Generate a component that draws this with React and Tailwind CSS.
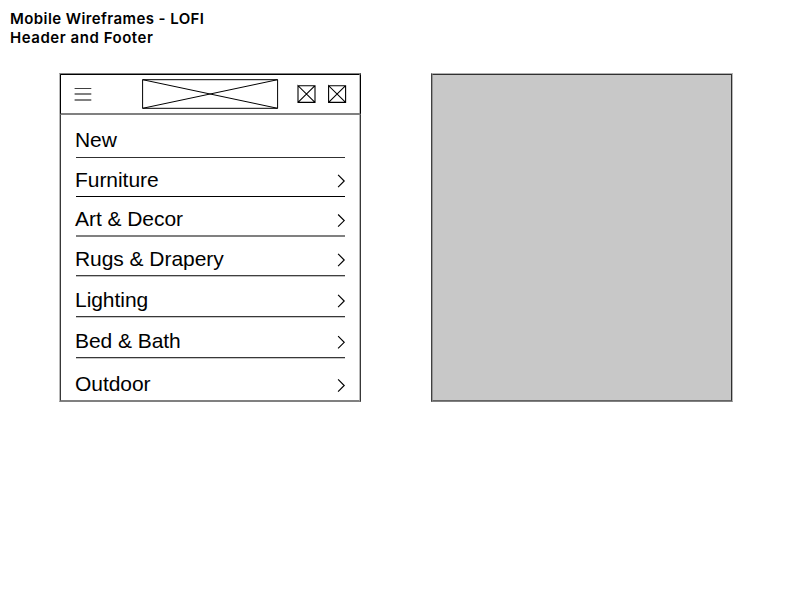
import React from "react";

const items = [
  { label: "New", row: "h-[43px] pt-[13px]", line: "border-t-[#303030] border-t h-px" },
  { label: "Furniture", row: "h-[39px] pt-[10px]", line: "border-t-black border-t h-px", arrow: 13 },
  { label: "Art & Decor", row: "h-[40px] pt-[10px]", line: "bg-[#808080] h-[2px]", arrow: 13.6 },
  { label: "Rugs & Drapery", row: "h-[40px] pt-[10px]", line: "border-t border-t-[#404040] bg-[#bfbfbf] h-[2px]", arrow: 13 },
  { label: "Lighting", row: "h-[41px] pt-[11px]", line: "border-t border-t-[#383838] bg-[#c7c7c7] h-[2px]", arrow: 13 },
  { label: "Bed & Bath", row: "h-[41px] pt-[11px]", line: "border-t border-t-[#383838] bg-[#c7c7c7] h-[2px]", arrow: 13.3 },
  { label: "Outdoor", row: "h-[41px] pt-[13px]", arrow: 13.5 },
];

function Chevron({ center }) {
  return (
    <svg className="mr-[-2px] shrink-0" width="10" height="24" viewBox="0 0 10 24" fill="none" stroke="black" strokeWidth="1.15">
      <path d={`M2.1 ${center - 6.1}L8.2 ${center}L2.1 ${center + 6.1}`} />
    </svg>
  );
}

function CrossBox({ offset }) {
  return (
    <svg width="19" height="19" viewBox="0 0 19 19" fill="none" stroke="black" strokeWidth="1.1">
      <path d={`M${offset} 1.7H${offset + 17}V18.4H${offset}V1.7L${offset + 17} 18.4M${offset} 18.4L${offset + 17} 1.7`} />
    </svg>
  );
}

export default function App() {
  return (
    <main className="h-[612px] w-[792px] overflow-hidden bg-white text-black">
      <h1 className="h-[73px] pl-[10px] pt-[9px] font-['Inter',sans-serif] text-[15px] font-semibold leading-[19px]">
        <span className="block tracking-[0.41px]">Mobile Wireframes - LOFI</span>
        <span className="block tracking-[0.54px]">Header and Footer</span>
      </h1>
      <div className="flex pl-[59px]">
        <section className="h-[329px] w-[302px] border border-t-[#808080] border-b-[#808080] border-l-[#b8b8b8] border-r-[#383838]">
          <div className="h-[327px] w-[300px] border border-t-black border-b-[#808080] border-l-[#383838] border-r-[#b8b8b8]">
            <header className="-ml-px -mr-[2px] flex h-[40px] border-x border-b-2 border-x-black border-b-[#808080]">
              <svg className="ml-[13px] mt-[12px]" width="18" height="16" viewBox="0 0 18 16" fill="none">
                <path d="M0.6 1.5H17.3" stroke="#404040" />
                <path d="M0.6 7H17.3M0.6 13H17.3" stroke="#808080" strokeWidth="2" />
              </svg>
              <svg className="ml-[49px] mt-[3px]" width="138" height="32" viewBox="0 0 138 32" fill="none" stroke="black">
                <path d="M1.6 1.7H136.6V30.3H1.6V1.7L136.6 30.3M1.6 30.3L136.6 1.7" />
              </svg>
              <div className="ml-[18px] mt-[9px] flex gap-[12px]">
                <CrossBox offset={1} />
                <CrossBox offset={0.6} />
              </div>
            </header>
            <nav className="pl-[14px] pr-[15px] font-['Liberation_Sans',Arial,sans-serif] text-[21px] leading-[24px] tracking-[-0.05px]">
              {items.map((item) => (
                <div key={item.label} className={`flex flex-col justify-between ${item.row}`}>
                  <div className="flex h-[24px] justify-between">
                    <span>{item.label}</span>
                    {item.arrow && <Chevron center={item.arrow} />}
                  </div>
                  {item.line && <div className={`-mr-px ml-px ${item.line}`} />}
                </div>
              ))}
            </nav>
          </div>
        </section>
        <section className="ml-[70px] h-[329px] w-[302px] border border-t-[#b0b0b0] border-b-[#808080] border-l-[#404040] border-r-[#b8b8b8]">
          <div className="h-[327px] w-[300px] border border-t-[#303030] border-b-[#646464] border-l-[#969696] border-r-[#303030] bg-[#c8c8c8]" />
        </section>
      </div>
    </main>
  );
}
